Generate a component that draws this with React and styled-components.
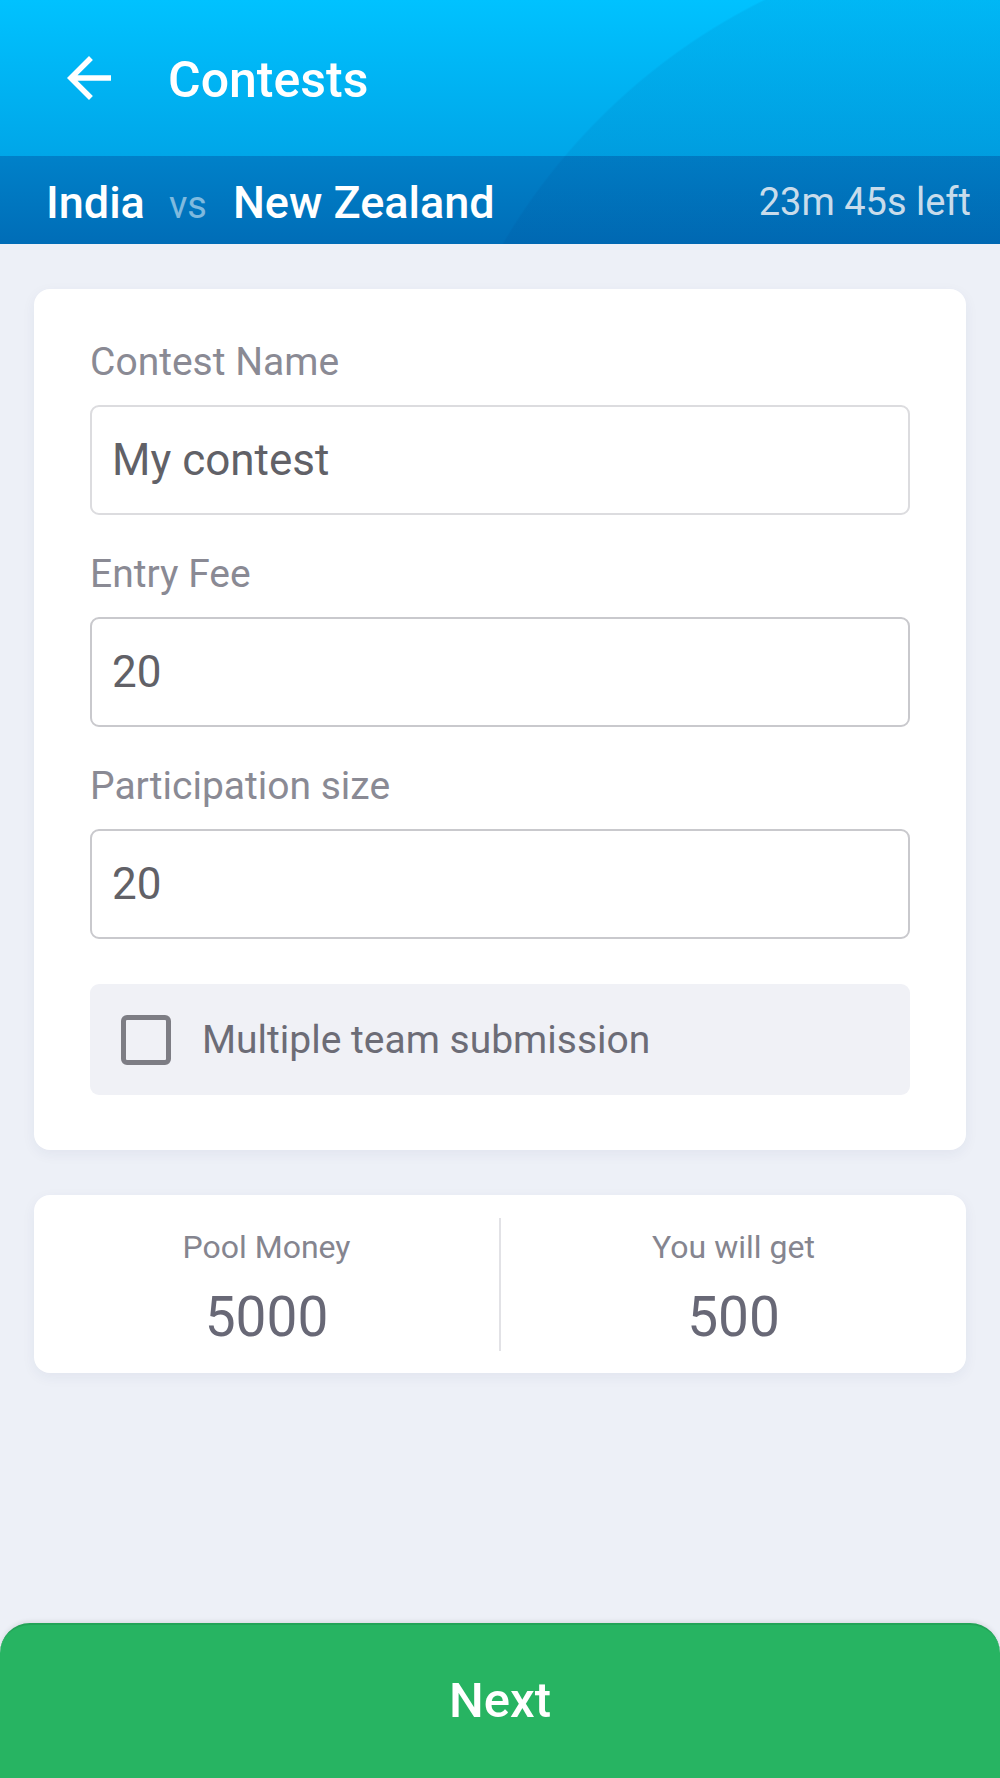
import React from 'react'
import styled, { createGlobalStyle } from 'styled-components'

const GlobalStyle = createGlobalStyle`
  * { box-sizing: border-box; }
  html, body {
    margin: 0;
    padding: 0;
    background: #edf0f7;
    font-family: Roboto, "Noto Sans", Arial, sans-serif;
  }
`

const Page = styled.div`
  min-height: 100vh;
  display: flex;
  flex-direction: column;
  background: #edf0f7;
`

const Header = styled.header`
  position: relative;
  overflow: hidden;
  color: #fff;

  /* big decorative circle on the right */
  &::after {
    content: '';
    position: absolute;
    inset: 0;
    pointer-events: none;
    background: radial-gradient(circle 626px at 1042px 560px, rgba(0, 40, 110, 0.07) 99.7%, transparent 100%);
  }
`

const TopBar = styled.div`
  height: 156px;
  display: flex;
  align-items: center;
  padding-left: 56px;
  background: linear-gradient(180deg, #00c2ff 0%, #00a6e8 100%);
`

const BackIcon = styled.svg`
  width: 66px;
  height: 66px;
  fill: #fff;
  flex-shrink: 0;
`

const Title = styled.h1`
  margin: 0 0 0 46px;
  font-size: 50px;
  font-weight: 500;
  line-height: 1;
  padding-top: 4px;
`

const MatchBar = styled.div`
  height: 88px;
  display: flex;
  align-items: center;
  justify-content: space-between;
  padding: 0 29px 0 46px;
  background: linear-gradient(180deg, #0081c9 0%, #006db7 100%);
`

const Teams = styled.div`
  display: flex;
  align-items: baseline;
  font-size: 45px;
  font-weight: 500;
  padding-top: 4px;
`

const Vs = styled.span`
  margin: 0 26px 0 24px;
  font-size: 38px;
  font-weight: 400;
  color: rgba(255, 255, 255, 0.5);
`

const Timer = styled.span`
  font-size: 38px;
  padding-top: 4px;
  color: rgba(255, 255, 255, 0.86);
`

const Content = styled.main`
  padding: 45px 34px 0;
  display: flex;
  flex-direction: column;
  gap: 45px;
`

const Card = styled.section`
  background: #fff;
  border-radius: 16px;
  box-shadow: 0 4px 14px rgba(30, 50, 100, 0.06);
`

const FormCard = styled(Card)`
  padding: 50px 56px 55px;
  display: flex;
  flex-direction: column;
`

const Label = styled.label`
  font-size: 39px;
  line-height: 46px;
  color: #8a8a94;
  margin-top: ${p => (p.$first ? 0 : 36)}px;
  margin-bottom: 20px;
`

const Input = styled.input`
  height: 110px;
  width: 100%;
  border: 2px solid ${p => (p.$soft ? '#dcdcdf' : '#c9c9cd')};
  border-radius: 9px;
  padding: 0 20px;
  font-family: inherit;
  font-size: 44px;
  color: #616167;
  background: #fff;
  outline: none;
`

const CheckRow = styled.label`
  margin-top: 45px;
  height: 111px;
  border-radius: 9px;
  background: #f0f1f6;
  display: flex;
  align-items: center;
  padding-left: 31px;
  gap: 31px;
  font-size: 39px;
  color: #6c6c76;
`

const Box = styled.span`
  width: 50px;
  height: 50px;
  border: 5px solid #7d7d84;
  border-radius: 6px;
  flex-shrink: 0;
`

const SummaryCard = styled(Card)`
  height: 178px;
  display: grid;
  grid-template-columns: 1fr 2px 1fr;
  align-items: center;
`

const Divider = styled.div`
  width: 2px;
  height: 133px;
  background: #e2e2e6;
`

const Stat = styled.div`
  display: flex;
  flex-direction: column;
  align-items: center;
  gap: 27px;
  padding-top: 8px;
`

const StatLabel = styled.span`
  font-size: 32px;
  line-height: 1;
  color: #85858f;
`

const StatValue = styled.span`
  font-size: 55px;
  line-height: 1;
  color: #686876;
`

const NextButton = styled.button`
  margin-top: auto;
  height: 155px;
  width: 100%;
  border: none;
  border-top: 2px solid #22a457;
  border-radius: 30px 30px 0 0;
  background: #27b462;
  color: #fff;
  font-family: inherit;
  font-size: 49px;
  font-weight: 500;
  padding-bottom: 4px;
  box-shadow: 0 -2px 4px rgba(0, 0, 0, 0.08);
`

export default function App() {
  return (
    <>
      <GlobalStyle />
      <Page>
        <Header>
          <TopBar>
            <BackIcon viewBox="0 0 24 24">
              <path d="M20 11H7.83l5.59-5.59L12 4l-8 8 8 8 1.41-1.41L7.83 13H20v-2z" />
            </BackIcon>
            <Title>Contests</Title>
          </TopBar>
          <MatchBar>
            <Teams>
              <span>India</span>
              <Vs>vs</Vs>
              <span>New Zealand</span>
            </Teams>
            <Timer>23m 45s left</Timer>
          </MatchBar>
        </Header>

        <Content>
          <FormCard>
            <Label $first>Contest Name</Label>
            <Input $soft defaultValue="My contest" />
            <Label>Entry Fee</Label>
            <Input defaultValue="20" />
            <Label>Participation size</Label>
            <Input defaultValue="20" />
            <CheckRow>
              <Box />
              Multiple team submission
            </CheckRow>
          </FormCard>

          <SummaryCard>
            <Stat>
              <StatLabel>Pool Money</StatLabel>
              <StatValue>5000</StatValue>
            </Stat>
            <Divider />
            <Stat>
              <StatLabel>You will get</StatLabel>
              <StatValue>500</StatValue>
            </Stat>
          </SummaryCard>
        </Content>

        <NextButton>Next</NextButton>
      </Page>
    </>
  )
}
